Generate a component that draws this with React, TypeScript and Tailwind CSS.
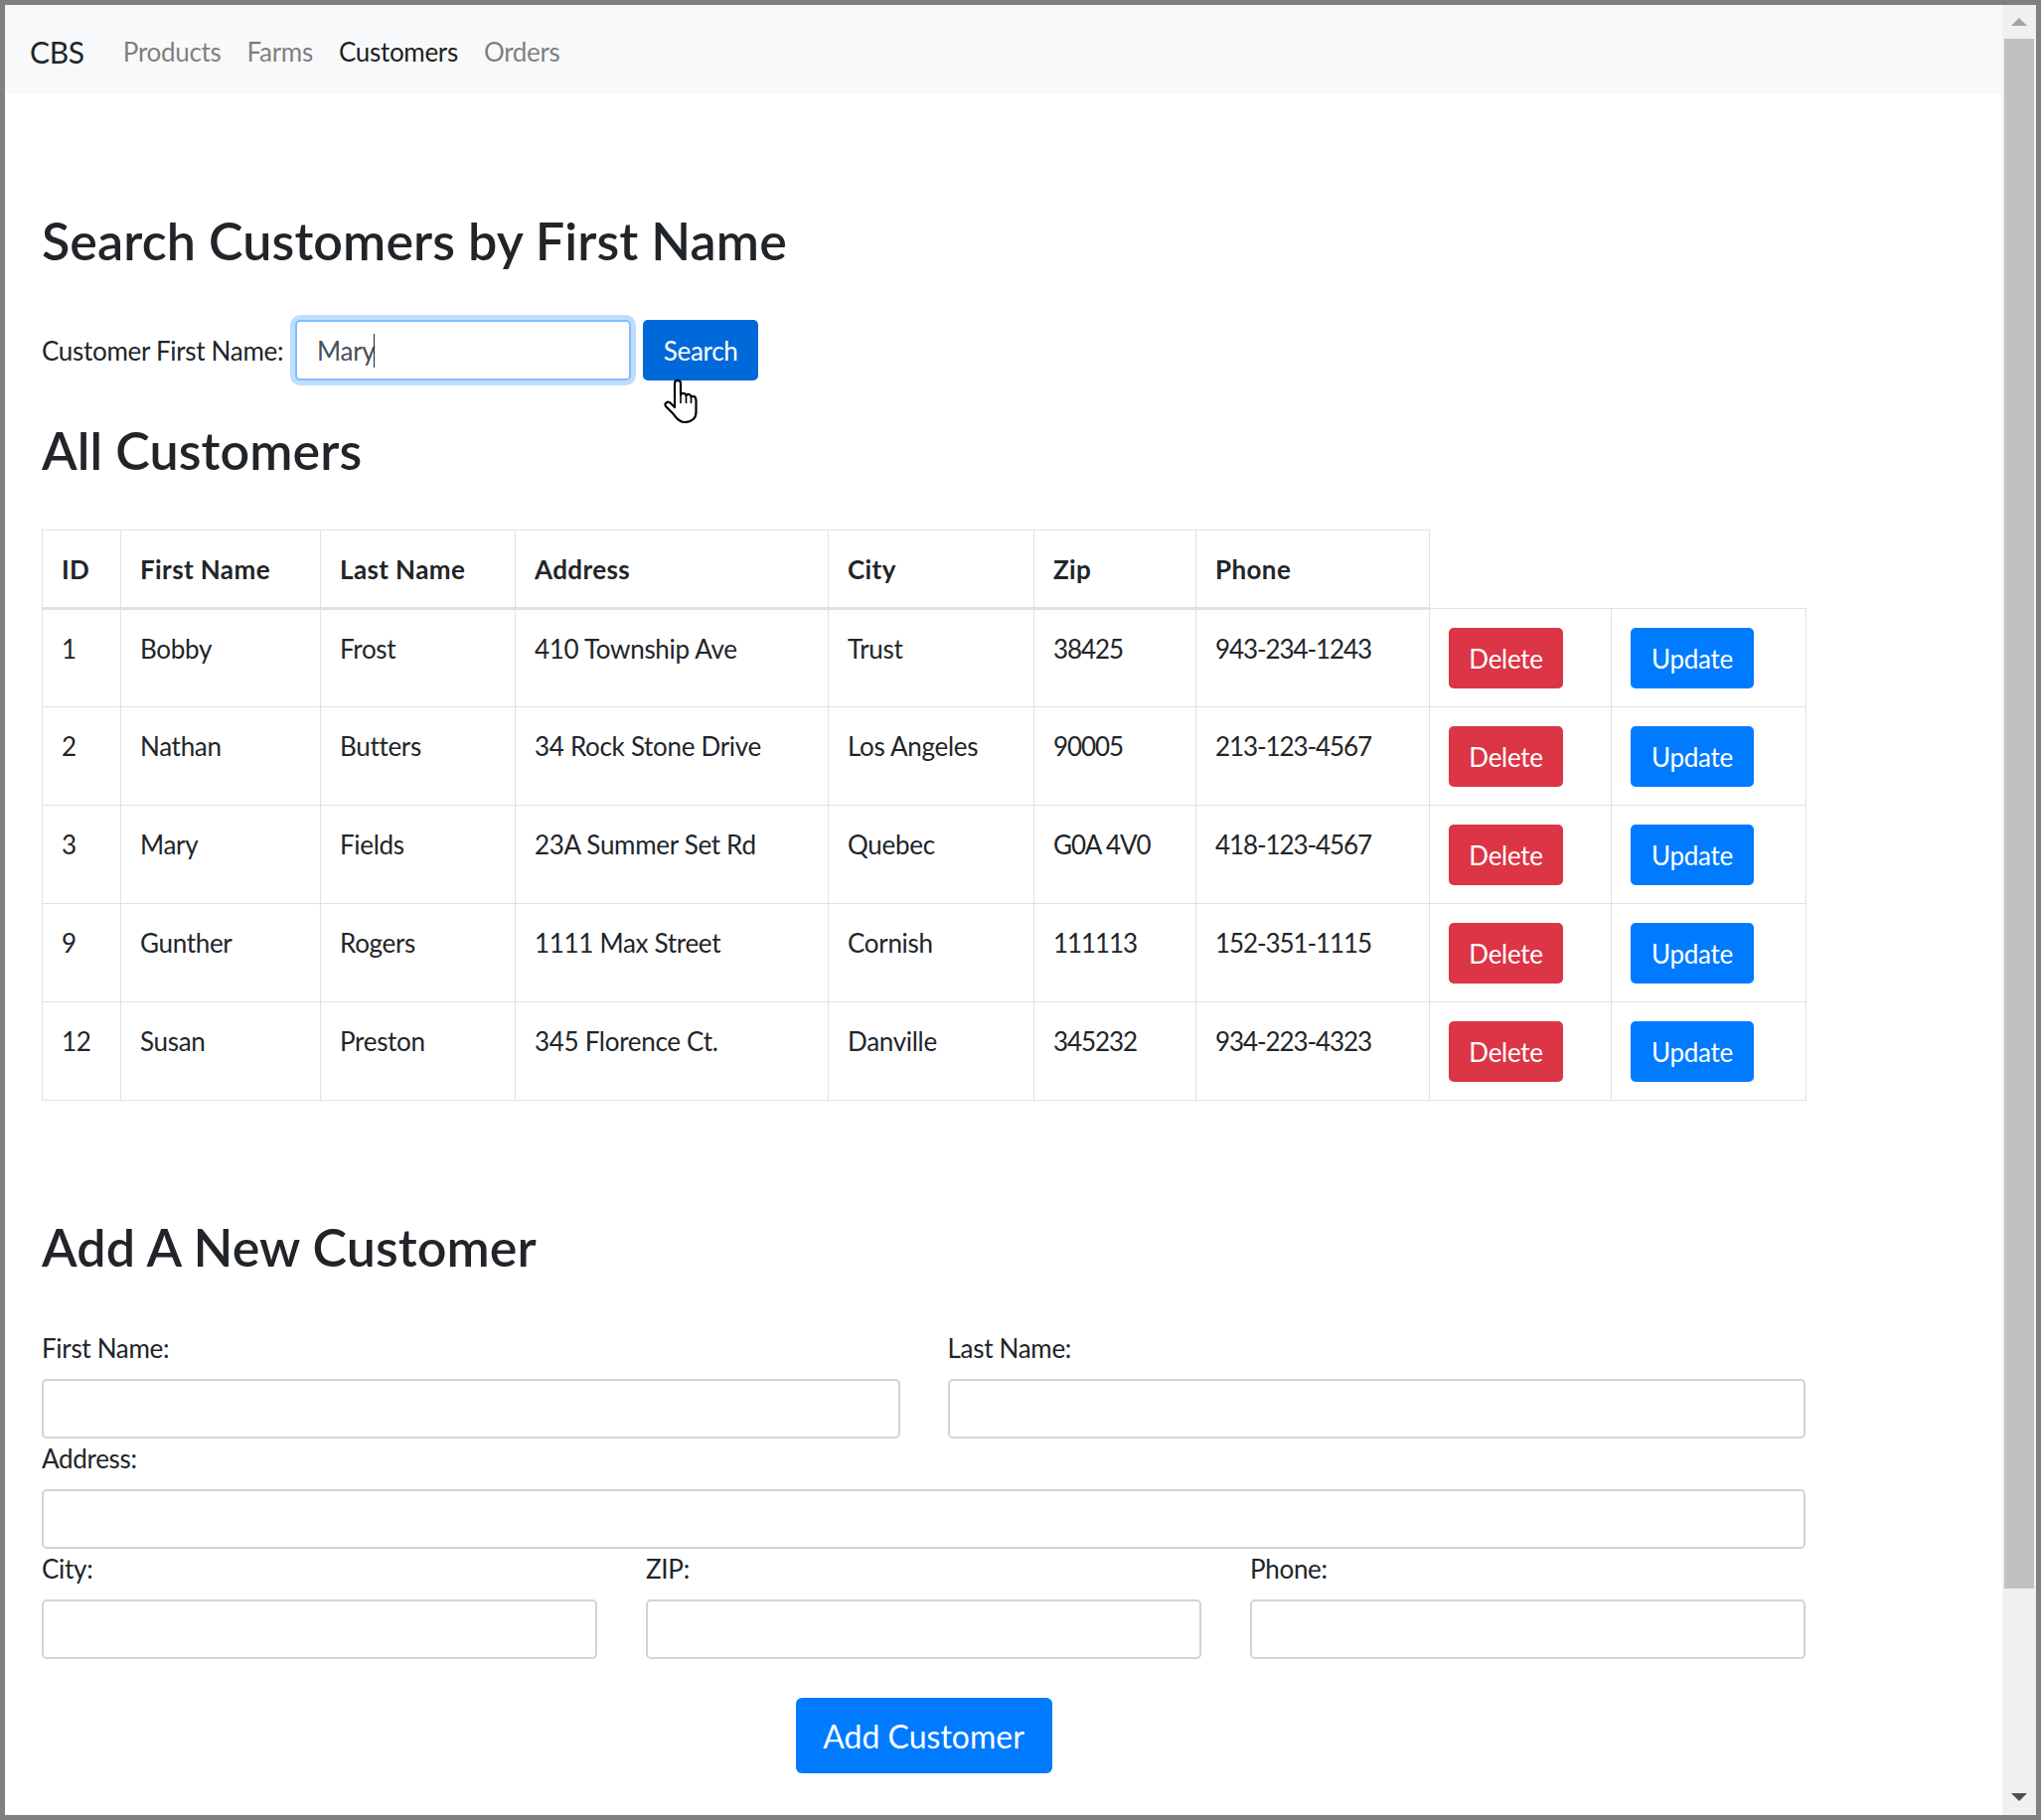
const rows = [
  { id: "1", first: "Bobby", last: "Frost", address: "410 Township Ave", city: "Trust", zip: "38425", phone: "943-234-1243" },
  { id: "2", first: "Nathan", last: "Butters", address: "34 Rock Stone Drive", city: "Los Angeles", zip: "90005", phone: "213-123-4567" },
  { id: "3", first: "Mary", last: "Fields", address: "23A Summer Set Rd", city: "Quebec", zip: "G0A 4V0", phone: "418-123-4567" },
  { id: "9", first: "Gunther", last: "Rogers", address: "1111 Max Street", city: "Cornish", zip: "111113", phone: "152-351-1115" },
  { id: "12", first: "Susan", last: "Preston", address: "345 Florence Ct.", city: "Danville", zip: "345232", phone: "934-223-4323" },
];

const headers = ["ID", "First Name", "Last Name", "Address", "City", "Zip", "Phone"];
const widths = ["w-[79px]", "w-[201px]", "w-[196px]", "w-[315px]", "w-[207px]", "w-[163px]", "w-[235px]", "w-[183px]", "w-[196px]"];

function Field({ label }: { label: string }) {
  return (
    <div>
      <label className="block h-[51px] pt-[1px] leading-[39px]">{label}</label>
      <input className="block h-[60px] w-full rounded-[5px] border-2 border-[#ced4da] bg-white" />
    </div>
  );
}

function HandCursor() {
  return (
    <svg className="absolute left-[21px] top-[60px]" width="34" height="44" viewBox="0 0 34 44" fill="#fff" stroke="#000" strokeWidth="2.2" strokeLinejoin="round">
      <path d="M11 4C11 0 17 0 17 4V15C20 13 22 14 22.5 16C25 14 27 15 27.5 17.5C30 16 32.5 17 32.5 21V33C32.5 39 28 43 21 43C15 43 12 38 9 34L2 27C0 24 4 21 7 24L11 28Z" />
      <path d="M17 15V24M22.5 16V24M27.5 17.5V24" fill="none" strokeWidth="1.6" />
    </svg>
  );
}

export default function App() {
  return (
    <div className="flex h-[1832px] w-[2054px] border-[5px] border-[#808080] bg-white font-['Lato',sans-serif] text-[26px] leading-[39px] tracking-[-0.3px] text-[#212529]">
      <div className="min-w-0 flex-1">
        <nav className="flex h-[89px] items-center bg-[#f8f9fa] pt-[5px] pl-[25px]">
          <span className="mr-[39px] text-[30px]">CBS</span>
          <div className="flex gap-[26px] text-[#00000080]">
            <span>Products</span>
            <span>Farms</span>
            <span className="text-[#000000e6]">Customers</span>
            <span>Orders</span>
          </div>
        </nav>

        <main className="pl-[37px]">
          <h2 className="mt-[117px] text-[52px] leading-[62px] font-semibold tracking-[0.1px]">Search Customers by First Name</h2>

          <div className="mt-[49px] flex items-center">
            <label className="mr-[12px] pt-[2px]">Customer First Name:</label>
            <div className="relative">
              <input
                readOnly
                value="Mary"
                className="block h-[61px] w-[338px] rounded-[5px] border-2 border-[#80bdff] bg-white pt-[1px] pl-[20px] text-[#495057] shadow-[0_0_0_5px_#bfdeff] outline-none"
              />
              <span className="absolute left-[79px] top-[14px] h-[34px] w-px bg-[#212529]" />
            </div>
            <div className="relative ml-[12px]">
              <button className="h-[61px] w-[116px] rounded-[5px] bg-[#0069d9] pt-[2px] text-white">Search</button>
              <HandCursor />
            </div>
          </div>

          <h2 className="mt-[39px] text-[52px] leading-[62px] font-semibold tracking-[0.1px]">All Customers</h2>

          <table className="mt-[49px] table-fixed border-collapse">
            <colgroup>
              {widths.map((w, i) => (
                <col key={i} className={w} />
              ))}
            </colgroup>
            <thead>
              <tr className="h-[79px]">
                {headers.map((h) => (
                  <th key={h} className="border border-b-[3px] border-[#dee2e6] px-[19px] pt-[2px] text-left font-bold tracking-[0.4px]">
                    {h}
                  </th>
                ))}
              </tr>
            </thead>
            <tbody>
              {rows.map((r) => (
                <tr key={r.id} className="h-[99px]">
                  {[r.id, r.first, r.last, r.address, r.city].map((v, i) => (
                    <td key={i} className="border border-[#dee2e6] px-[19px] pt-[20px] align-top">
                      {v}
                    </td>
                  ))}
                  {[r.zip, r.phone].map((v, i) => (
                    <td key={i} className="border border-[#dee2e6] px-[19px] pt-[20px] align-top tracking-[-1.1px]">
                      {v}
                    </td>
                  ))}
                  <td className="border border-[#dee2e6] px-[19px] align-middle">
                    <button className="h-[61px] w-[115px] rounded-[5px] bg-[#dc3545] pt-[2px] text-white">Delete</button>
                  </td>
                  <td className="border border-[#dee2e6] px-[19px] align-middle">
                    <button className="h-[61px] w-[124px] rounded-[5px] bg-[#007bff] pt-[2px] text-white">Update</button>
                  </td>
                </tr>
              ))}
            </tbody>
          </table>

          <h2 className="mt-[116px] text-[52px] leading-[62px] font-semibold tracking-[0.1px]">Add A New Customer</h2>

          <div className="mt-[51px] w-[1775px]">
            <div className="grid grid-cols-2 gap-x-[48px]">
              <Field label="First Name:" />
              <Field label="Last Name:" />
            </div>
            <Field label="Address:" />
            <div className="grid grid-cols-3 gap-x-[49px]">
              <Field label="City:" />
              <Field label="ZIP:" />
              <Field label="Phone:" />
            </div>
            <div className="mt-[39px] flex justify-center">
              <button className="h-[76px] w-[258px] rounded-[6px] bg-[#007bff] pt-[1px] text-[32px] tracking-normal text-white">Add Customer</button>
            </div>
          </div>
        </main>
      </div>

      <div className="flex w-[34px] shrink-0 flex-col items-center bg-[#f0f0f0]">
        <div className="mt-[13px] h-0 w-0 border-x-[8px] border-b-[8px] border-x-transparent border-b-[#a3a3a3]" />
        <div className="mt-[13px] h-[1560px] w-[30px] bg-[#c1c1c1]" />
        <div className="mt-auto mb-[14px] h-0 w-0 border-x-[8px] border-t-[8px] border-x-transparent border-t-[#505050]" />
      </div>
    </div>
  );
}
